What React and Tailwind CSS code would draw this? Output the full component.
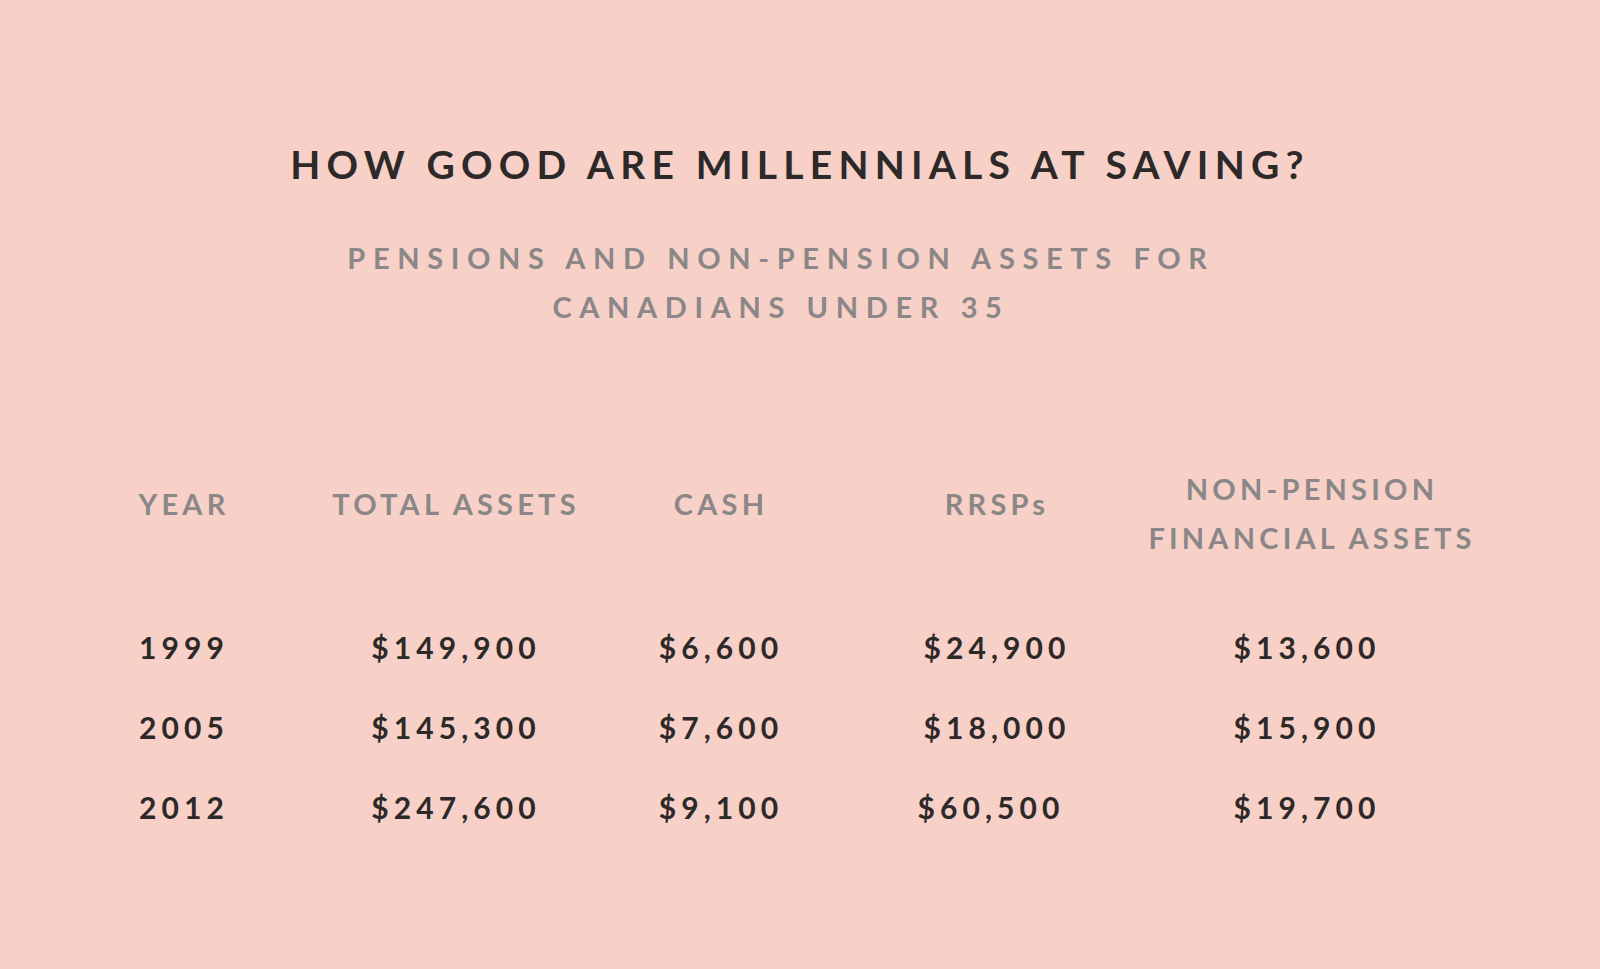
import React from 'react'

const rows = [
  { year: '1999', total: '$149,900', cash: '$6,600', rrsp: '$24,900', other: '$13,600' },
  { year: '2005', total: '$145,300', cash: '$7,600', rrsp: '$18,000', other: '$15,900' },
  { year: '2012', total: '$247,600', cash: '$9,100', rrsp: '$60,500', other: '$19,700', rrspShift: true },
]

const App = () => {
  return (
    <div className="w-full h-[969px] bg-[#f7d0c7] font-['Lato','Liberation_Sans',sans-serif] overflow-hidden">
      <h1 className="pt-[140px] text-center text-[39px] leading-[48px] font-bold tracking-[0.16em] text-[#2d2929]">
        HOW GOOD ARE MILLENNIALS AT SAVING?
      </h1>

      <p className="mt-[45px] pr-[38px] text-center text-[29px] leading-[49px] font-bold tracking-[0.263em] text-[#8b8788]">
        PENSIONS AND NON-PENSION ASSETS FOR
        <br />
        CANADIANS UNDER 35
      </p>

      <div className="mt-[133px] ml-[48px] grid grid-cols-[272px_272px_258px_294px_336px] text-center">
        <div className="mt-[15px] text-[29px] leading-[49px] font-bold tracking-[0.145em] text-[#8b8788]">YEAR</div>
        <div className="mt-[15px] text-[29px] leading-[49px] font-bold tracking-[0.145em] text-[#8b8788]">TOTAL ASSETS</div>
        <div className="mt-[15px] text-[29px] leading-[49px] font-bold tracking-[0.145em] text-[#8b8788]">CASH</div>
        <div className="mt-[15px] text-[29px] leading-[49px] font-bold tracking-[0.145em] text-[#8b8788]">RRSPs</div>
        <div className="text-[29px] leading-[49px] font-bold tracking-[0.145em] text-[#8b8788]">
          NON-PENSION
          <br />
          FINANCIAL ASSETS
        </div>
      </div>

      <div className="mt-[45px] ml-[48px]">
        {rows.map((item, index) => (
          <div key={index} className="grid grid-cols-[272px_272px_258px_294px_336px] text-center text-[30px] leading-[80px] font-bold tracking-[0.17em] text-[#2d2929]">
            <div>{item.year}</div>
            <div>{item.total}</div>
            <div>{item.cash}</div>
            <div className={item.rrspShift ? 'pr-[12px]' : ''}>{item.rrsp}</div>
            <div className="pr-[10px]">{item.other}</div>
          </div>
        ))}
      </div>
    </div>
  )
}

export default App
